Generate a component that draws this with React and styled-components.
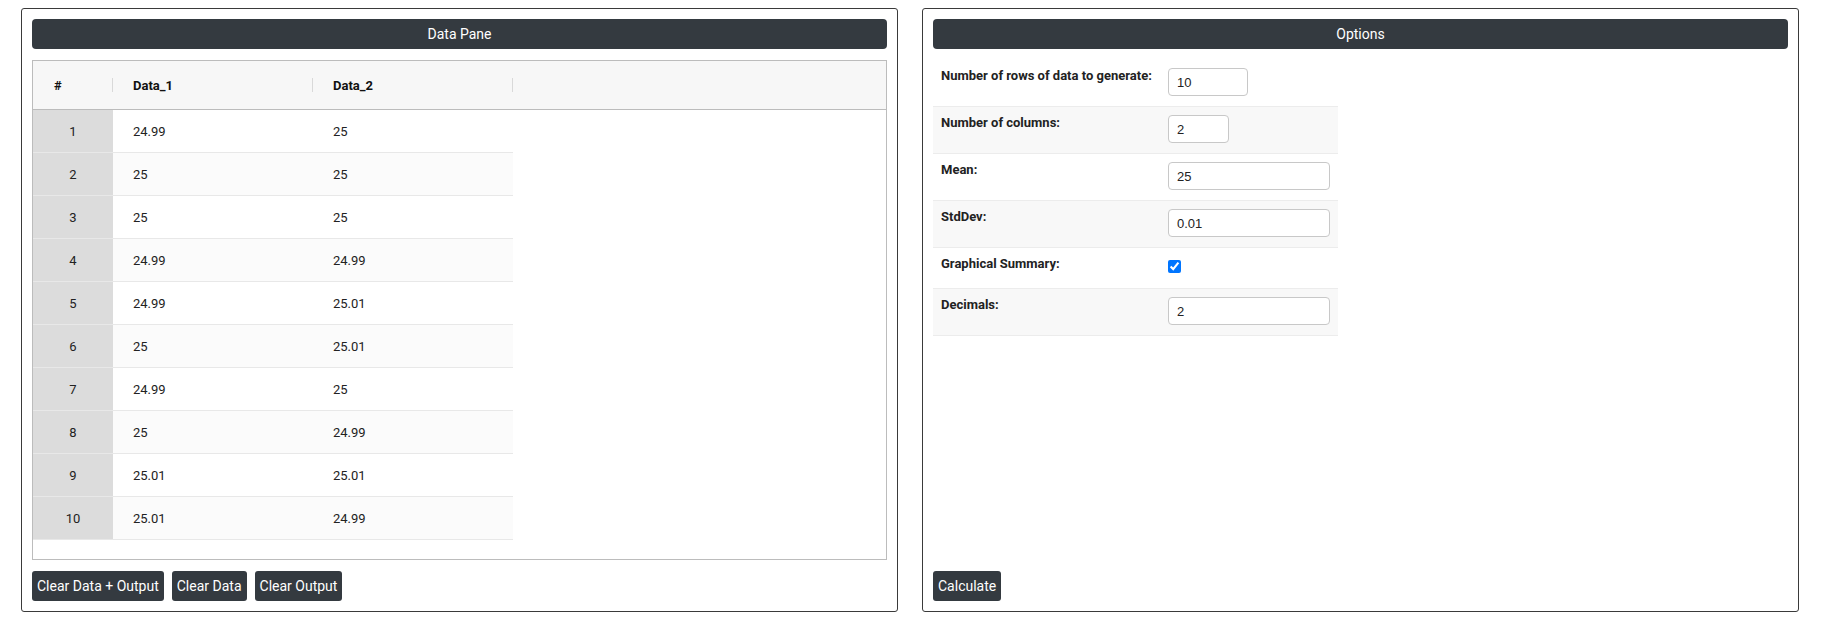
import React from 'react';
import styled, { createGlobalStyle } from 'styled-components';

//   Styling
const GlobalStyle = createGlobalStyle`
  html, body {
    margin: 0;
    padding: 0;
    background: #fff;
    font-family: Roboto, "Liberation Sans", sans-serif;
    color: #212529;
  }
`;

const Page = styled.div`
  display: flex;
  gap: 24px;
  padding: 8px 0 0 21px;
`;

const Panel = styled.section`
  display: flex;
  flex-direction: column;
  box-sizing: border-box;
  width: 877px;
  height: 604px;
  padding: 10px;
  border: 1px solid #3a3a3a;
  border-radius: 3px;
`;

const PanelTitle = styled.div`
  height: 30px;
  line-height: 30px;
  background: #343a40;
  border-radius: 4px;
  color: #fff;
  font-size: 14px;
  text-align: center;
`;

const PanelBody = styled.div`
  flex: 1;
  margin-top: 11px;
  min-height: 0;
`;

const Footer = styled.div`
  display: flex;
  gap: 8px;
  margin-top: 11px;
`;

const Button = styled.button`
  height: 30px;
  padding: 0 5px;
  border: none;
  border-radius: 3px;
  background: #343a40;
  color: #fff;
  font-family: Roboto, "Liberation Sans", sans-serif;
  font-size: 14px;
  cursor: pointer;
`;

const Grid = styled.div`
  box-sizing: border-box;
  height: 100%;
  border: 1px solid #bcbcbc;
  overflow: hidden;
`;

const HeadRow = styled.div`
  display: flex;
  height: 48px;
  background: #f7f7f7;
  border-bottom: 1px solid #bcbcbc;
`;

const HeadCell = styled.div`
  position: relative;
  display: flex;
  align-items: center;
  box-sizing: border-box;
  width: ${(p) => p.$w}px;
  padding-left: ${(p) => (p.$narrow ? 21 : 20)}px;
  font-size: 13px;
  font-weight: 700;
  color: #111;

  &::after {
    content: '';
    position: absolute;
    right: 0;
    top: 17px;
    width: 1px;
    height: 14px;
    background: #d9d9d9;
  }
`;

const Row = styled.div`
  display: flex;
  width: 480px;
  height: 42px;
  border-bottom: 1px solid #e8e8e8;
  background: ${(p) => (p.$even ? '#fbfbfb' : '#fff')};
`;

const IndexCell = styled.div`
  display: flex;
  align-items: center;
  justify-content: center;
  width: 80px;
  background: #dcdcdc;
  font-size: 13px;
  color: #222;
`;

const Cell = styled.div`
  display: flex;
  align-items: center;
  box-sizing: border-box;
  width: 200px;
  padding-left: 20px;
  font-size: 13px;
  color: #222;
`;

const Form = styled.div`
  width: 405px;
`;

const FormRow = styled.div`
  display: flex;
  align-items: flex-start;
  box-sizing: border-box;
  padding: 8px 0 10px;
  min-height: ${(p) => (p.$short ? 41 : 47)}px;
  border-bottom: 1px solid #ececec;
  background: ${(p) => (p.$even ? '#f8f8f8' : '#fff')};
`;

const Label = styled.div`
  box-sizing: border-box;
  width: 235px;
  padding: 0 0 0 8px;
  font-size: 13px;
  font-weight: 700;
  color: #222;
`;

const Input = styled.input`
  box-sizing: border-box;
  width: ${(p) => p.$w}px;
  height: 28px;
  padding: 0 8px;
  border: 1px solid #c8c8c8;
  border-radius: 4px;
  font-family: "Liberation Sans", Arial, sans-serif;
  font-size: 13px;
  color: #222;
`;

const Check = styled.input`
  width: 13px;
  height: 13px;
  margin: 4px 0 0 0;
  accent-color: #0075ff;
`;

const data = [
  [24.99, 25],
  [25, 25],
  [25, 25],
  [24.99, 24.99],
  [24.99, 25.01],
  [25, 25.01],
  [24.99, 25],
  [25, 24.99],
  [25.01, 25.01],
  [25.01, 24.99],
];

const options = [
  { label: 'Number of rows of data to generate:', value: '10', w: 80 },
  { label: 'Number of columns:', value: '2', w: 61 },
  { label: 'Mean:', value: '25', w: 162 },
  { label: 'StdDev:', value: '0.01', w: 162 },
  { label: 'Graphical Summary:', check: true },
  { label: 'Decimals:', value: '2', w: 162 },
];

const App = () => {
  return (
    <>
      <GlobalStyle />
      <Page>
        <Panel>
          <PanelTitle>Data Pane</PanelTitle>
          <PanelBody>
            <Grid>
              <HeadRow>
                <HeadCell $w={80} $narrow>#</HeadCell>
                <HeadCell $w={200}>Data_1</HeadCell>
                <HeadCell $w={200}>Data_2</HeadCell>
              </HeadRow>
              {data.map((r, i) => (
                <Row key={i} $even={i % 2 === 1}>
                  <IndexCell>{i + 1}</IndexCell>
                  <Cell>{r[0]}</Cell>
                  <Cell>{r[1]}</Cell>
                </Row>
              ))}
            </Grid>
          </PanelBody>
          <Footer>
            <Button>Clear Data + Output</Button>
            <Button>Clear Data</Button>
            <Button>Clear Output</Button>
          </Footer>
        </Panel>
        <Panel>
          <PanelTitle>Options</PanelTitle>
          <PanelBody>
            <Form>
              {options.map((o, i) => (
                <FormRow key={o.label} $even={i % 2 === 1} $short={o.check}>
                  <Label>{o.label}</Label>
                  {o.check ? (
                    <Check type="checkbox" defaultChecked />
                  ) : (
                    <Input $w={o.w} defaultValue={o.value} />
                  )}
                </FormRow>
              ))}
            </Form>
          </PanelBody>
          <Footer>
            <Button>Calculate</Button>
          </Footer>
        </Panel>
      </Page>
    </>
  );
};

export default App;
